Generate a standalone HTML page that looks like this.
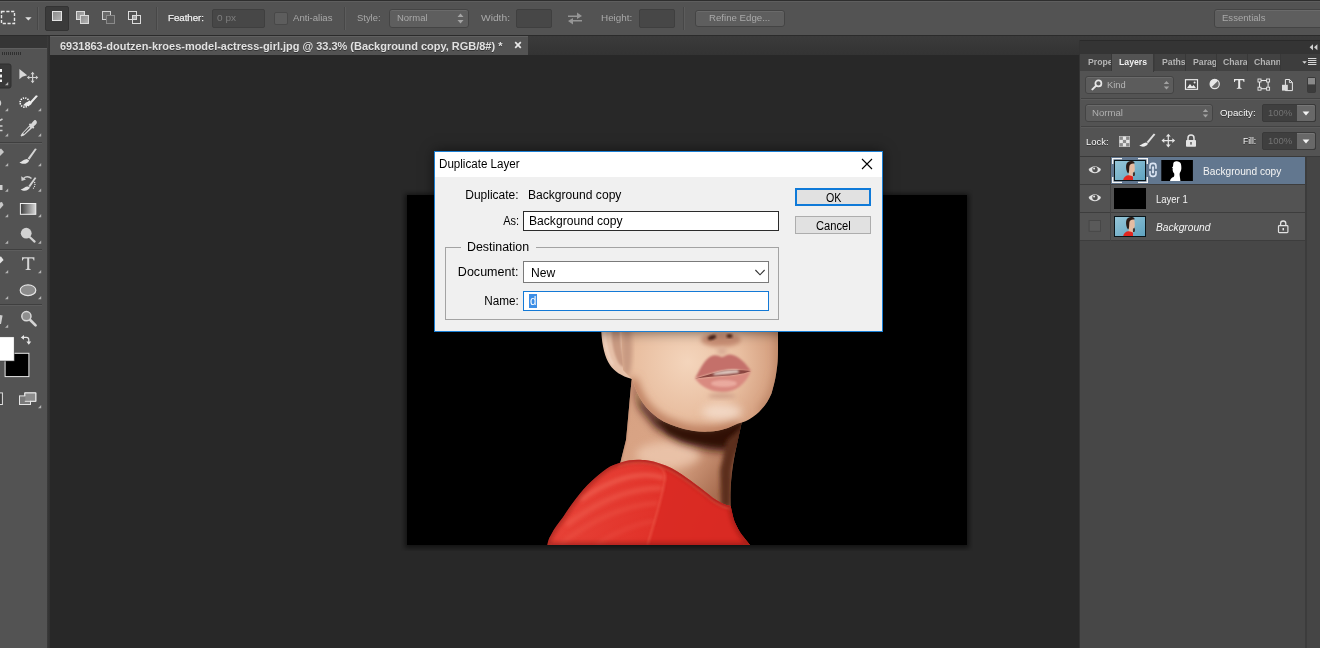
<!DOCTYPE html>
<html>
<head>
<meta charset="utf-8">
<title>Duplicate Layer</title>
<style>
*{box-sizing:border-box;margin:0;padding:0}
html,body{width:1320px;height:648px;overflow:hidden;background:#282828}
body{position:relative;font-family:"Liberation Sans",sans-serif;font-size:10.5px;color:#d6d6d6}
.abs{position:absolute}
.t{position:absolute;white-space:nowrap;line-height:14px;height:14px;transform-origin:0 50%}
.t.r{transform-origin:100% 50%}
/* ---------- options bar ---------- */
#optbar{left:0;top:0;width:1320px;height:36px;background:#535353;border-top:1px solid #2e2e2e;border-bottom:1px solid #2b2b2b;box-shadow:inset 0 1px 0 #5e5e5e}
.osep{position:absolute;top:7px;width:2px;height:23px;background:#474747;border-right:1px solid #5c5c5c}
.obox{position:absolute;background:#474747;border:1px solid #3f3f3f;border-radius:2px}
.odrop{position:absolute;background:#5e5e5e;border:1px solid #444;border-radius:3px;box-shadow:inset 0 1px 0 #6a6a6a}
.ol{color:#e4e4e4;text-shadow:0 1px 0 #333}
.od{color:#a9a9a9}
/* ---------- doc tab bar ---------- */
#tabbar{left:0;top:36px;width:1320px;height:19px;background:linear-gradient(#3b3b3b,#333)}
#doctab{left:50px;top:36px;width:478px;height:19px;background:#535353;border-top:1px solid #606060}
/* ---------- tools ---------- */
#tools{left:0;top:36px;width:47px;height:612px;background:#535353}
#toolshead{left:0;top:36px;width:47px;height:12px;background:#353535;box-shadow:0 1px 0 #5f5f5f}
#toolsborder{left:47px;top:36px;width:3px;height:612px;background:linear-gradient(90deg,#3c3c3c,#333 60%,#303030)}
/* ---------- canvas ---------- */
#canvas{left:50px;top:55px;width:1030px;height:593px;background:#282828}
/* ---------- right dock ---------- */
#dock{left:1080px;top:40px;width:240px;height:608px;background:#535353}
#dockhead{left:1080px;top:40px;width:240px;height:14px;background:#343434;border-top:1px solid #2a2a2a}
.ptab{position:absolute;top:54px;height:17px;background:#424242;border-right:1px solid #383838;overflow:hidden}
.pt{font-weight:bold;color:#b4b4b4;font-size:9.5px}
.ptab span{position:absolute;top:2px;left:6px;white-space:nowrap;color:#bdbdbd;font-weight:bold;font-size:11px;line-height:14px}
/* ---------- dialog ---------- */
#dlg{left:434px;top:151px;width:449px;height:181px;background:#f0f0f0;border:1px solid #1a7fd4;box-shadow:0 0 12px rgba(0,0,0,.55)}
.dt{position:absolute;white-space:nowrap;color:#000;font-size:12.5px;line-height:15px;height:15px;transform-origin:0 50%}
.dt.r{transform-origin:100% 50%}
.dt.c{text-align:center;transform-origin:50% 50%}
</style>
</head>
<body>
<!-- canvas -->
<div id="canvas" class="abs"></div>
<div id="tabbar" class="abs"></div>
<div id="doctab" class="abs"></div>
<div id="tools" class="abs"></div>
<div id="toolshead" class="abs"></div>
<div id="toolsborder" class="abs"></div>
<div id="optbar" class="abs"></div>
<div id="dock" class="abs"></div>
<div id="dockhead" class="abs"></div>
<!--PHOTO-->
<svg class="abs" style="left:401px;top:189px" width="572" height="362" viewBox="401 189 572 362">
<defs>
<filter id="b05" x="-20%" y="-20%" width="140%" height="140%"><feGaussianBlur stdDeviation="0.9"/></filter>
<filter id="b1" x="-20%" y="-20%" width="140%" height="140%"><feGaussianBlur stdDeviation="1"/></filter>
<filter id="b2" x="-30%" y="-30%" width="160%" height="160%"><feGaussianBlur stdDeviation="2.2"/></filter>
<filter id="b4" x="-40%" y="-40%" width="180%" height="180%"><feGaussianBlur stdDeviation="4.5"/></filter>
<filter id="b8" x="-50%" y="-50%" width="200%" height="200%"><feGaussianBlur stdDeviation="8"/></filter>
<filter id="bs" x="-5%" y="-5%" width="110%" height="110%"><feGaussianBlur stdDeviation="2.5"/></filter>
<radialGradient id="gface" gradientUnits="userSpaceOnUse" cx="688" cy="362" r="105"><stop offset="0" stop-color="#f4d5bc"/><stop offset=".5" stop-color="#e9bfa1"/><stop offset="1" stop-color="#c98d6c"/></radialGradient>
<linearGradient id="gneck" gradientUnits="userSpaceOnUse" x1="640" y1="400" x2="735" y2="470"><stop offset="0" stop-color="#d7a283"/><stop offset=".55" stop-color="#dba687"/><stop offset="1" stop-color="#a86d50"/></linearGradient>
<linearGradient id="gdress" gradientUnits="userSpaceOnUse" x1="560" y1="470" x2="740" y2="545"><stop offset="0" stop-color="#e8453a"/><stop offset=".5" stop-color="#e2342b"/><stop offset="1" stop-color="#d42720"/></linearGradient>
<clipPath id="cneck"><path d="M632,376 C630,395 628,420 626,440 L620,464 L640,530 L726,530 L730.6,506 C730,490 731,470 737,444 L742,421 L700,400 Z"/></clipPath>
<clipPath id="cface"><path d="M621,325 L778,325 L778,345 C778,360 777.5,365 776.5,371 C775,382 773,388 771.5,393.5 C768,402 763,408 759,412 C751,419 746,422 738,423.5 C729,428 720,431 710,431.5 C700,432 692,431 684,429 C674,426 665,423 658,418 C652,413 647,409 643,403 C638,396 635,388 632,379 L623,370 Z"/></clipPath>
<clipPath id="cdress"><path id="pdress" d="M620.7,462.6 C627,460 634,459.5 640,459.7 C648,460 650,460.6 653.5,461.6 C662,464 670,467 676.6,471 C684,476 690,480 696,484.8 C702,489 708,494 713,498 C719,502 725,505 730.6,506 C732,512 733,517 734.5,521.5 C737,527 739,531 742,535 L750,545 L547.4,545 C548,541 549,538 551,535 C554,529 558,524 562.8,517.6 C567,511 571,505 576.3,498.3 C581,492 586,486 591.7,481 C597,476 602,472 607,468.4 C611,466 616,464 620.7,462.6 Z"/></clipPath>
<clipPath id="cphoto"><rect x="407" y="195" width="560" height="350"/></clipPath>
</defs>
<rect x="405" y="194" width="564" height="354" fill="#000" opacity=".55" filter="url(#bs)"/>
<rect x="407" y="195" width="560" height="350" fill="#000"/>
<g clip-path="url(#cphoto)">
 <!-- neck -->
 <g clip-path="url(#cneck)">
  <rect x="600" y="370" width="160" height="170" fill="url(#gneck)"/>
  <ellipse cx="668" cy="455" rx="32" ry="13" fill="#eecbb2" opacity=".75" filter="url(#b4)"/>
  <path d="M628,372 L640,398 L655,414 L682,426 L710,429 L745,418 L745,444 L734,452 L708,450 L680,442 L656,428 L640,408 Z" fill="#3a170c" filter="url(#b4)"/>
  <path d="M660,420 L684,428 L712,430 L744,420 L744,440 L720,446 L690,442 L668,434 Z" fill="#2a0e06" opacity=".6" filter="url(#b2)"/>
  <path d="M745,425 L738,446 L732,470 L731,508 L721,506 L720,470 L727,440 Z" fill="#5c2e1e" filter="url(#b2)"/>
  <path d="M631,380 L625,440 L619,466" stroke="#c08a70" stroke-width="3" fill="none" filter="url(#b1)"/>
 </g>
 <!-- ear -->
 <path d="M601,325 L601.3,332 C602,345 605,358 610,365 C614,371 621,376 632,379 L630,350 L626,325 Z" fill="#e6c0a8"/>
 <path d="M612,328 C611,340 613,352 618,362 C620,366 624,368 626,366 C622,356 620,342 620,328 Z" fill="#c99a82" filter="url(#b1)"/>
 <path d="M604,330 C605,345 608,357 613,365" stroke="#f1d6c4" stroke-width="2" fill="none" filter="url(#b1)"/>
 <!-- face -->
 <g clip-path="url(#cface)">
  <rect x="600" y="320" width="190" height="120" fill="url(#gface)"/>
  <path d="M632,379 C635,388 638,396 643,403 C647,409 652,413 658,418 C665,423 674,426 684,429 C692,431 700,432 710,431.5 C720,431 729,428 738,423.5" stroke="#b9795a" stroke-width="9" fill="none" filter="url(#b4)"/>
  <path d="M779,325 L779,371 L773,394 L761,413" stroke="#b98263" stroke-width="7" fill="none" filter="url(#b4)"/>
  <ellipse cx="627" cy="350" rx="5" ry="26" fill="#c89a82" filter="url(#b2)"/>
  <!-- nose -->
  <ellipse cx="721" cy="340" rx="20" ry="7" fill="#c98f74" filter="url(#b2)"/>
  <ellipse cx="712" cy="337.5" rx="4.2" ry="2.2" fill="#4a2418" filter="url(#b1)" transform="rotate(-18 712 337.5)"/>
  <ellipse cx="729.5" cy="336" rx="3" ry="2" fill="#5a2d1e" filter="url(#b1)"/>
  <ellipse cx="722" cy="351" rx="5" ry="4" fill="#d9ac95" filter="url(#b2)"/>
  <!-- lips -->
  <path d="M695,378.5 C701,367 706,357.5 713,355.6 C717,354.4 720,357 722,357 C725,356.6 727,354.4 730.4,354.6 C739,356 746,363.6 751,371 C744,371.4 738,369.4 732,369.8 C722,370.4 712,373.4 695,378.5 Z" fill="#c4706a" filter="url(#b05)"/>
  <path d="M695,378.5 C700,385.6 709,391.6 722,392.4 C735,392.8 746,384 751,371 C742,374 735,375 726,375.5 C716,376 706,377 695,378.5 Z" fill="#d98a80" filter="url(#b05)"/>
  <path d="M695,378.5 C706,375.6 714,372.6 722,371 C730,369.6 740,369.6 751,371 C742,374.4 732,375.6 722,376 C712,376.6 704,377.4 695,378.5 Z" fill="#8a4540"/>
  <path d="M713,373.5 C720,371 728,369.5 738,370 L739,372.8 C730,373.8 722,374.8 714,375.2 Z" fill="#e2cfc6" filter="url(#b05)"/>
  <ellipse cx="724" cy="383.5" rx="13" ry="3.4" fill="#edb0a4" opacity=".85" filter="url(#b1)"/>
  <ellipse cx="722" cy="396" rx="14" ry="3" fill="#d3a48d" filter="url(#b2)"/>
  <ellipse cx="722" cy="412" rx="20" ry="8" fill="#f5dfcf" opacity=".8" filter="url(#b4)"/>
 </g>
 <!-- dress -->
 <g clip-path="url(#cdress)">
  <rect x="540" y="455" width="220" height="95" fill="url(#gdress)"/>
  <path d="M653.5,461.6 C662,466 666,472 665,479 C662,500 654,522 647.7,545 L760,545 L740,500 Z" fill="#d92a23" opacity=".85"/>
  <path d="M580,500 C610,480 640,470 664,478" stroke="#f26a5a" stroke-width="4" fill="none" opacity=".7" filter="url(#b2)"/>
  <path d="M566,525 C600,500 630,488 662,488" stroke="#ef5e50" stroke-width="5" fill="none" opacity=".6" filter="url(#b2)"/>
  <path d="M560,545 C590,520 625,505 658,503" stroke="#ee5a4c" stroke-width="4" fill="none" opacity=".5" filter="url(#b2)"/>
  <path d="M596,545 C615,532 635,524 654,521" stroke="#ec5548" stroke-width="4" fill="none" opacity=".4" filter="url(#b2)"/>
  <path d="M653.5,461.6 C662,466 666,472 665,479 C662,500 654,522 647.7,545" stroke="#f0604f" stroke-width="1.5" fill="none" opacity=".8" filter="url(#b1)"/>
  <path d="M618,466 C627,463 634,462.5 640,462.7 C648,463 651,463.6 654,464.6 C662,467 670,470 676,474 C684,479 690,483 696,488 C702,492 708,497 713,501 C719,505 725,508 731,509" stroke="#ef5b4c" stroke-width="2" fill="none" opacity=".8" filter="url(#b1)"/>
  <use href="#pdress" fill="none" stroke="#7d130f" stroke-width="5" opacity=".55" filter="url(#b2)"/>
 </g>
</g>
</svg>
<!--/PHOTO-->
<!--OPTBAR-->
<div class="abs" id="optitems" style="left:0;top:0;width:1320px;height:36px;font-size:9.5px">
 <!-- marquee tool preset -->
 <svg class="abs" style="left:0;top:9px" width="36" height="17" viewBox="0 0 36 17">
  <rect x="1.5" y="2.5" width="13" height="12" fill="none" stroke="#e6e6e6" stroke-width="1.4" stroke-dasharray="3.2 1.6"/>
  <path d="M25.2,8.3 L31.6,8.3 L28.4,11.6 Z" fill="#e0e0e0"/>
 </svg>
 <div class="osep" style="left:37px"></div>
 <div class="abs" style="left:45px;top:6px;width:24px;height:25px;background:#3b3b3b;border:1px solid #333;border-radius:2px"></div>
 <svg class="abs" style="left:48px;top:8px" width="100" height="20" viewBox="48 8 100 20">
  <defs><linearGradient id="gsq" x1="0" y1="0" x2="1" y2="1"><stop offset="0" stop-color="#8a8a8a"/><stop offset="1" stop-color="#b5b5b5"/></linearGradient></defs>
  <rect x="52.5" y="11.5" width="9" height="9" fill="url(#gsq)" stroke="#e4e4e4"/>
  <rect x="76.5" y="11.5" width="8" height="8" fill="url(#gsq)" stroke="#dcdcdc"/>
  <rect x="80.5" y="15.5" width="8" height="8" fill="url(#gsq)" stroke="#dcdcdc"/>
  <rect x="102.5" y="11.5" width="8" height="8" fill="#6a6a6a" stroke="#d0d0d0"/>
  <rect x="106.5" y="15.5" width="8" height="8" fill="#5a5a5a" stroke="#8a8a8a"/>
  <rect x="128.5" y="11.5" width="8" height="8" fill="none" stroke="#dcdcdc"/>
  <rect x="132.5" y="15.5" width="8" height="8" fill="none" stroke="#dcdcdc"/>
  <rect x="133" y="16" width="3" height="3" fill="#a8a8a8"/>
 </svg>
 <div class="osep" style="left:156px"></div>
 <div class="t ol" style="transform:scaleX(1.0172);left:168px;top:11.4px;color:#f2f2f2;-webkit-text-stroke:.25px #f2f2f2">Feather:</div>
 <div class="obox" style="left:212px;top:9px;width:53px;height:19px"></div>
 <div class="t" style="transform:scaleX(1.0574);left:217px;top:11.4px;color:#7d7d7d">0 px</div>
 <div class="abs" style="left:274px;top:12px;width:14px;height:13px;background:#5d5d5d;border:1px solid #484848;border-radius:2px"></div>
 <div class="t od" style="transform:scaleX(1.0108);left:293px;top:11.4px">Anti-alias</div>
 <div class="osep" style="left:344px"></div>
 <div class="t od" style="transform:scaleX(0.9888);left:357px;top:11.4px">Style:</div>
 <div class="odrop" style="left:389px;top:9px;width:80px;height:19px"></div>
 <div class="t od" style="transform:scaleX(0.9959);left:397px;top:11.4px">Normal</div>
 <svg class="abs" style="left:457px;top:13px" width="7" height="11" viewBox="0 0 7 11"><path d="M0.5,4 L6.5,4 L3.5,0.5 Z M0.5,7 L6.5,7 L3.5,10.5 Z" fill="#a5a5a5"/></svg>
 <div class="t od" style="transform:scaleX(1.0766);left:481px;top:11.4px">Width:</div>
 <div class="obox" style="left:516px;top:9px;width:36px;height:19px"></div>
 <svg class="abs" style="left:567px;top:11px" width="16" height="15" viewBox="0 0 16 15"><path d="M1,4.5 L10,4.5 L10,1.5 L15,5 L10,8 L10,6 L1,6 Z M15,10.5 L6,10.5 L6,13.5 L1,10 L6,7 L6,9 L15,9 Z" fill="#969696"/></svg>
 <div class="t od" style="transform:scaleX(1.0395);left:601px;top:11.4px">Height:</div>
 <div class="obox" style="left:639px;top:9px;width:36px;height:19px"></div>
 <div class="osep" style="left:683px"></div>
 <div class="odrop" style="left:695px;top:10px;width:90px;height:17px"></div>
 <div class="t od" style="transform:scaleX(1.0171);left:709px;top:11.4px">Refine Edge...</div>
 <div class="odrop" style="left:1214px;top:9px;width:120px;height:19px"></div>
 <div class="t od" style="transform:scaleX(1.0043);left:1222px;top:11.4px">Essentials</div>
</div>
<!-- document tab text -->
<div class="t" id="doctitle" style="transform:scaleX(0.9966);left:59.8px;top:39px;color:#e2e2e2;font-weight:bold;font-size:11px;text-shadow:0 1px 0 #333">6931863-doutzen-kroes-model-actress-girl.jpg @ 33.3% (Background copy, RGB/8#) *</div>
<svg class="abs" style="left:514px;top:41px" width="8" height="8" viewBox="0 0 8 8"><path d="M1.2,1.2 L6.8,6.8 M6.8,1.2 L1.2,6.8" stroke="#e8e8e8" stroke-width="1.7"/></svg>
<!--/OPTBAR-->
<!--TOOLS-->
<svg class="abs" id="toolsvg" style="left:0;top:48px" width="48" height="372" viewBox="0 48 48 372">
<defs>
 <linearGradient id="ggrad" x1="0" y1="0" x2="1" y2="0"><stop offset="0" stop-color="#3c3c3c"/><stop offset="1" stop-color="#d8d8d8"/></linearGradient>
 <path id="tri" d="M3.2,0 L3.2,3.2 L0,3.2 Z" fill="#b4b4b4"/>
</defs>
<!-- grip -->
<path d="M2.5,52 v3 M4.5,52 v3 M6.5,52 v3 M8.5,52 v3 M10.5,52 v3 M12.5,52 v3 M14.5,52 v3 M16.5,52 v3 M18.5,52 v3 M20.5,52 v3" stroke="#2f2f2f" stroke-width="1"/>
<!-- selected marquee -->
<rect x="-2" y="64" width="13" height="24" rx="2" fill="#393939" stroke="#303030"/>
<path d="M1,69 V72 M1,74.5 V77.5 M1,79.5 V82" stroke="#f0f0f0" stroke-width="2"/>
<use href="#tri" x="5" y="82"/>
<!-- move -->
<path d="M19.4,69 L19.4,79.2 L22.3,76.8 L27.2,75.2 Z" fill="#d8d8d8"/>
<path d="M32.6,72.8 V82.2 M27.9,77.5 H37.3" stroke="#d0d0d0" stroke-width="1.2"/>
<path d="M32.6,71.8 l-2,2.4 h4 Z M32.6,83.2 l-2,-2.4 h4 Z M26.9,77.5 l2.4,-2 v4 Z M38.3,77.5 l-2.4,-2 v4 Z" fill="#d0d0d0"/>
<!-- lasso fragment -->
<path d="M-3,99.5 a3.5,3.5 0 1 1 0,7" stroke="#cfcfcf" stroke-width="1.5" fill="none"/>
<use href="#tri" x="5" y="108"/>
<!-- quick select -->
<circle cx="24.7" cy="102.5" r="4.6" fill="none" stroke="#ffffff" stroke-width="1.6" stroke-dasharray="1.3 1.1"/>
<path d="M38,96 L36,95.2 L30.5,101.3 C27,101 25,103.5 23,105.2 C26.5,106.8 31,106 32,102.8 Z" fill="#ececec"/>
<use href="#tri" x="38" y="108"/>
<!-- crop fragment -->
<path d="M-1,121 L2.5,119 M-2,126 H2.5 M-2,130.5 H2.5" stroke="#cfcfcf" stroke-width="1.6"/>
<use href="#tri" x="5" y="133.3"/>
<!-- eyedropper -->
<path d="M35.8,120.2 C37.3,121.3 37.2,123.2 35.8,124.6 L33.6,126.6 L34.4,127.6 L33.2,128.8 L32.3,128 L24,135.6 L21.2,136.6 L20.6,135.6 L22,133.2 L29.6,125.2 L28.8,124.4 L30,123.2 L31,124 L33,121.6 C34,120 35,119.6 35.8,120.2 Z" fill="#d8d8d8"/>
<path d="M29.8,127.4 L23.6,133.6" stroke="#4a4a4a" stroke-width="1.3"/>
<use href="#tri" x="38" y="133.3"/>
<!-- sep -->
<path d="M0,142.5 H42" stroke="#3f3f3f"/><path d="M0,143.5 H42" stroke="#5d5d5d"/>
<!-- heal fragment -->
<path d="M-3,151 L1,148.5 L4,152 L0,156 Z" fill="#c6c6c6"/>
<use href="#tri" x="5" y="163"/>
<!-- brush -->
<path d="M36.8,149 L35,148.4 L27.6,158.6 L29.4,159.8 Z" fill="#d4d4d4"/>
<path d="M27,159 C24,159 22.6,161.5 19.4,162.4 C22.5,164.8 27.8,164.2 29.2,160.4 Z" fill="#e2e2e2"/>
<use href="#tri" x="38" y="163"/>
<!-- stamp fragment -->
<path d="M-2,185 H2.5 V190 H-2 Z" fill="#d0d0d0"/>
<use href="#tri" x="5" y="188.5"/>
<!-- history brush -->
<path d="M36.4,178 L34.8,177.2 L28.4,186 L30,187.2 Z" fill="#d4d4d4"/>
<path d="M27.8,186.4 C25,186.4 23.6,188.6 20.6,189.4 C23.6,191.6 28.6,191 30,187.6 Z" fill="#e2e2e2"/>
<path d="M31.5,178.6 C29,176 25.5,176.4 23.6,178.4" stroke="#cfcfcf" stroke-width="1.4" fill="none"/>
<path d="M21.2,176.2 L21.6,181 L26,179.6 Z" fill="#cfcfcf"/>
<path d="M34.5,182 C35.5,184.5 34.8,187 33,188.6" stroke="#e8e8e8" stroke-width="1.1" stroke-dasharray="1 1" fill="none"/>
<use href="#tri" x="38" y="188.5"/>
<!-- eraser fragment -->
<path d="M-3,203 L2,202 L3.5,205 L-1,210 Z" fill="#c9c9c9"/>
<use href="#tri" x="5" y="214"/>
<!-- gradient -->
<rect x="20.4" y="203.5" width="15.4" height="10.8" fill="url(#ggrad)" stroke="#f0f0f0" stroke-width="1"/>
<use href="#tri" x="38" y="214"/>
<!-- blur fragment / dodge -->
<use href="#tri" x="5" y="240.5"/>
<circle cx="26.2" cy="233.2" r="5.4" fill="#d2d2d2"/>
<path d="M29.6,237 L34.6,241.6" stroke="#d2d2d2" stroke-width="2.2" stroke-linecap="round"/>
<use href="#tri" x="38" y="240.5"/>
<!-- sep -->
<path d="M0,249.5 H42" stroke="#3f3f3f"/><path d="M0,250.5 H42" stroke="#5d5d5d"/>
<!-- pen fragment -->
<path d="M-2,257 L1,256.6 L3.6,260 L0,263.4 Z" fill="#e2e2e2"/>
<use href="#tri" x="5" y="270"/>
<!-- T -->
<path d="M22,257.2 H34.4 V260.4 H33.6 C33.3,258.8 32.8,258.4 31.4,258.4 H29.2 V268 C29.2,268.9 29.6,269.2 30.8,269.3 V270 H25.6 V269.3 C26.8,269.2 27.2,268.9 27.2,268 V258.4 H25 C23.6,258.4 23.1,258.8 22.8,260.4 H22 Z" fill="#d6d6d6"/>
<use href="#tri" x="38" y="270"/>
<!-- path select fragment / ellipse -->
<use href="#tri" x="5" y="296"/>
<ellipse cx="28" cy="290.2" rx="7.8" ry="5.4" fill="#8c8c8c" stroke="#e6e6e6" stroke-width="1.2"/>
<use href="#tri" x="38" y="296"/>
<!-- sep -->
<path d="M0,304.5 H42" stroke="#3f3f3f"/><path d="M0,305.5 H42" stroke="#5d5d5d"/>
<!-- hand fragment -->
<path d="M-1,315 L2.6,315.4 L1,324 L-2,324 Z" fill="#cdcdcd"/>
<use href="#tri" x="5" y="324.6"/>
<!-- zoom -->
<circle cx="26.4" cy="316.2" r="4.6" fill="#8f8f8f" stroke="#d8d8d8" stroke-width="1.5"/>
<path d="M30.2,320 L35.6,325.4" stroke="#d4d4d4" stroke-width="2.6" stroke-linecap="round"/>
<!-- swap arrows -->
<path d="M23.6,337.4 H26.4 C28.2,337.4 28.8,338 28.8,339.8 V342.2" stroke="#e6e6e6" stroke-width="1.2" fill="none"/>
<path d="M20.8,337.4 L24,335 V339.8 Z M28.8,344.8 L26.4,341.6 H31.2 Z" fill="#e6e6e6"/>
<!-- colours -->
<rect x="5.1" y="353.3" width="23.8" height="23.3" fill="#000" stroke="#e8e8e8" stroke-width="1"/>
<rect x="-2" y="336.8" width="16.2" height="24.2" fill="#fff" stroke="#3c3c3c" stroke-width=".6"/>
<!-- quick mask fragment -->
<rect x="-3" y="392.9" width="5.4" height="11.6" fill="#3f3f3f" stroke="#e0e0e0" stroke-width="1"/>
<!-- screen mode -->
<rect x="24.8" y="392.9" width="11" height="8.4" fill="#8a8a8a" stroke="#e4e4e4" stroke-width="1"/>
<rect x="19.5" y="395.9" width="11" height="8.6" fill="#7a7a7a" stroke="#e4e4e4" stroke-width="1"/>
<rect x="25.3" y="393.4" width="10" height="7.4" fill="#8c8c8c"/>
<path d="M24.8,401.3 H35.8 V392.9 H24.8" fill="none" stroke="#e4e4e4" stroke-width="1"/>
<path d="M24.8,392.9 V396" stroke="#e4e4e4" stroke-width="1"/>
<use href="#tri" x="38" y="405"/>
</svg>
<!--/TOOLS-->
<!--DOCK-->
<div class="abs" id="dockitems" style="left:0;top:0;width:1320px;height:648px;font-size:10px">
 <!-- collapse chevrons -->
 <svg class="abs" style="left:1309px;top:44px" width="9" height="7" viewBox="0 0 9 7"><path d="M4,0.3 L4,6.2 L0.6,3.2 Z M8.4,0.3 L8.4,6.2 L5,3.2 Z" fill="#cfcfcf"/></svg>
 <!-- tabs -->
 <div class="abs" style="left:1080px;top:54px;width:240px;height:17px;background:#3d3d3d"></div>
 <div class="ptab" style="left:1080px;width:32px"></div>
 <div class="ptab" style="left:1112px;width:42px;background:#535353;border-right:1px solid #3a3a3a;height:18px"></div>
 <div class="ptab" style="left:1155px;width:31px"></div>
 <div class="ptab" style="left:1186px;width:31px"></div>
 <div class="ptab" style="left:1217px;width:31px"></div>
 <div class="ptab" style="left:1248px;width:33px"></div>
 <div class="abs" style="left:1087.5px;top:55px;width:23.7px;height:16px;overflow:hidden"><div class="t pt" style="transform:scaleX(0.9150);left:0;top:0.4px;color:#b4b4b4">Properties</div></div>
 <div class="abs" style="left:1118.5px;top:55px;width:31.5px;height:16px;overflow:hidden"><div class="t pt" style="transform:scaleX(0.9150);left:0;top:0.4px;color:#f2f2f2">Layers</div></div>
 <div class="abs" style="left:1161.6px;top:55px;width:23.6px;height:16px;overflow:hidden"><div class="t pt" style="transform:scaleX(0.9150);left:0;top:0.4px;color:#b4b4b4">Paths</div></div>
 <div class="abs" style="left:1192.8px;top:55px;width:23.0px;height:16px;overflow:hidden"><div class="t pt" style="transform:scaleX(0.9150);left:0;top:0.4px;color:#b4b4b4">Paragraph</div></div>
 <div class="abs" style="left:1223px;top:55px;width:24.3px;height:16px;overflow:hidden"><div class="t pt" style="transform:scaleX(0.9150);left:0;top:0.4px;color:#b4b4b4">Character</div></div>
 <div class="abs" style="left:1254px;top:55px;width:26.0px;height:16px;overflow:hidden"><div class="t pt" style="transform:scaleX(0.9150);left:0;top:0.4px;color:#b4b4b4">Channels</div></div>
 <svg class="abs" style="left:1302px;top:58px" width="15" height="8" viewBox="0 0 15 8"><path d="M0.3,3.2 H4.8 L2.5,5.8 Z" fill="#d6d6d6"/><path d="M6,0.5 H14.4 M6,2.5 H14.4 M6,4.5 H14.4 M6,6.5 H14.4" stroke="#d6d6d6" stroke-width="1"/></svg>
 <!-- filter row -->
 <div class="odrop" style="left:1085px;top:76px;width:89px;height:18px;background:#5c5c5c"></div>
 <svg class="abs" style="left:1091px;top:79px" width="12" height="12" viewBox="0 0 12 12"><circle cx="7.4" cy="4.4" r="3" fill="none" stroke="#e6e6e6" stroke-width="1.7"/><path d="M5.2,6.6 L1.4,10.4" stroke="#e6e6e6" stroke-width="2" stroke-linecap="round"/></svg>
 <div class="t" style="transform:scaleX(0.9834);font-size:9.5px;left:1106.6px;top:78.3px;color:#b6b6b6">Kind</div>
 <svg class="abs" style="left:1163px;top:80px" width="7" height="11" viewBox="0 0 7 11"><path d="M0.8,4 L6.2,4 L3.5,1 Z M0.8,6.6 L6.2,6.6 L3.5,9.6 Z" fill="#a2a2a2"/></svg>
 <svg class="abs" style="left:1184px;top:76px" width="134" height="18" viewBox="1184 76 134 18">
  <!-- image -->
  <rect x="1185.5" y="79.7" width="12" height="9.6" fill="#4a4a4a" stroke="#ececec" stroke-width="1.2"/>
  <path d="M1187,88 L1190,84 L1192,86.4 L1193.6,85 L1196,88 Z" fill="#ececec"/><circle cx="1194.6" cy="82.6" r="1" fill="#ececec"/>
  <!-- adjust -->
  <circle cx="1214.7" cy="84" r="4.6" fill="#6a6a6a" stroke="#e8e8e8" stroke-width="1.2"/>
  <path d="M1211.4,87.3 A4.6,4.6 0 0 1 1218,80.7 Z" fill="#e8e8e8"/>
  <!-- T -->
  <path d="M1234,79 H1244.4 V82 H1243.6 C1243.4,80.6 1243,80.2 1241.8,80.2 H1240.2 V87 C1240.2,87.8 1240.6,88 1241.6,88.1 V88.8 H1236.8 V88.1 C1237.8,88 1238.2,87.8 1238.2,87 V80.2 H1236.6 C1235.4,80.2 1235,80.6 1234.8,82 H1234 Z" fill="#ececec"/>
  <!-- transform -->
  <rect x="1259.5" y="80.5" width="8.6" height="8.2" fill="none" stroke="#e8e8e8" stroke-width="1.1"/>
  <rect x="1258" y="79" width="3" height="3" fill="#535353" stroke="#e8e8e8" stroke-width=".9"/><rect x="1266.6" y="79" width="3" height="3" fill="#535353" stroke="#e8e8e8" stroke-width=".9"/>
  <rect x="1258" y="87.2" width="3" height="3" fill="#535353" stroke="#e8e8e8" stroke-width=".9"/><rect x="1266.6" y="87.2" width="3" height="3" fill="#535353" stroke="#e8e8e8" stroke-width=".9"/>
  <!-- smart object -->
  <path d="M1285.4,79.5 H1289.6 L1292.4,82.4 V90.6 H1285.4 Z" fill="#535353" stroke="#e8e8e8" stroke-width="1"/>
  <path d="M1289.4,79.5 V82.6 H1292.4" fill="none" stroke="#e8e8e8" stroke-width=".9"/>
  <rect x="1282" y="84.8" width="5.8" height="5.8" fill="#dcdcdc"/>
  <!-- toggle -->
  <rect x="1307.5" y="77.5" width="8" height="15" rx="1" fill="#3c3c3c" stroke="#3a3a3a"/>
  <rect x="1308" y="78" width="7" height="6.4" fill="#8a8a8a"/>
 </svg>
 <div class="abs" style="left:1081px;top:98px;width:239px;height:1px;background:#424242"></div>
 <div class="abs" style="left:1081px;top:99px;width:239px;height:1px;background:#5b5b5b"></div>
 <!-- blend row -->
 <div class="odrop" style="left:1085px;top:104px;width:128px;height:18px;background:#5c5c5c"></div>
 <div class="t" style="transform:scaleX(1.0122);font-size:9.5px;left:1092.3px;top:105.6px;color:#b0b0b0">Normal</div>
 <svg class="abs" style="left:1202px;top:108px" width="7" height="11" viewBox="0 0 7 11"><path d="M0.8,4 L6.2,4 L3.5,1 Z M0.8,6.6 L6.2,6.6 L3.5,9.6 Z" fill="#a2a2a2"/></svg>
 <div class="t ol" style="transform:scaleX(1.0212);font-size:9.5px;left:1220.2px;top:105.8px;color:#f6f6f6">Opacity:</div>
 <div class="abs" style="left:1262px;top:104px;width:54px;height:18px;background:#3f3f3f;border:1px solid #393939;border-radius:2px"></div>
 <div class="abs" style="left:1297px;top:105px;width:18px;height:16px;background:#686868;border-radius:0 2px 2px 0;box-shadow:inset 0 1px 0 #777"></div>
 <div class="t" style="transform:scaleX(0.9995);font-size:9.5px;left:1267.7px;top:106.3px;color:#737373">100%</div>
 <svg class="abs" style="left:1302px;top:111px" width="8" height="5" viewBox="0 0 8 5"><path d="M0.6,0.6 H7.4 L4,4.4 Z" fill="#f4f4f4"/></svg>
 <div class="abs" style="left:1081px;top:126px;width:239px;height:1px;background:#424242"></div>
 <div class="abs" style="left:1081px;top:127px;width:239px;height:1px;background:#5b5b5b"></div>
 <!-- lock row -->
 <div class="t ol" style="transform:scaleX(0.9948);font-size:9.5px;left:1086.4px;top:134.5px;color:#f6f6f6">Lock:</div>
 <svg class="abs" style="left:1118px;top:132px" width="82" height="17" viewBox="1118 132 82 17">
  <rect x="1119.3" y="136.3" width="10.4" height="10.4" fill="#e6e6e6" stroke="#cfcfcf" stroke-width=".6"/>
  <rect x="1119.6" y="136.6" width="3.3" height="3.3" fill="#8a8a8a"/><rect x="1126.1" y="136.6" width="3.3" height="3.3" fill="#8a8a8a"/><rect x="1122.9" y="139.9" width="3.2" height="3.2" fill="#8a8a8a"/><rect x="1119.6" y="143.1" width="3.3" height="3.3" fill="#8a8a8a"/><rect x="1126.1" y="143.1" width="3.3" height="3.3" fill="#8a8a8a"/>
  <path d="M1155.4,134.4 L1153.8,133.6 L1146.6,142 L1148.2,143.2 Z" fill="#e0e0e0"/>
  <path d="M1146,142.4 C1143.4,142.4 1142,144.8 1139.2,145.6 C1142,147.6 1146.8,147 1148,143.6 Z" fill="#ececec"/>
  <path d="M1168.3,135.6 V145.6 M1163.3,140.6 H1173.3" stroke="#e4e4e4" stroke-width="1.2"/>
  <path d="M1168.3,133.8 l-2.4,2.8 h4.8 Z M1168.3,147.4 l-2.4,-2.8 h4.8 Z M1161.5,140.6 l2.8,-2.4 v4.8 Z M1175.1,140.6 l-2.8,-2.4 v4.8 Z" fill="#e4e4e4"/>
  <rect x="1186" y="140" width="10" height="6.8" rx=".8" fill="#e4e4e4"/>
  <path d="M1188,140 V138 a3,3 0 0 1 6,0 V140" fill="none" stroke="#e4e4e4" stroke-width="1.5"/>
  <rect x="1190.3" y="142" width="1.4" height="2.6" fill="#555"/>
 </svg>
 <div class="t ol" style="transform:scaleX(0.8930);font-size:9.5px;left:1242.7px;top:133.8px;color:#f6f6f6">Fill:</div>
 <div class="abs" style="left:1262px;top:132px;width:54px;height:18px;background:#3f3f3f;border:1px solid #393939;border-radius:2px"></div>
 <div class="abs" style="left:1297px;top:133px;width:18px;height:16px;background:#686868;border-radius:0 2px 2px 0;box-shadow:inset 0 1px 0 #777"></div>
 <div class="t" style="transform:scaleX(0.9995);font-size:9.5px;left:1267.7px;top:134.3px;color:#737373">100%</div>
 <svg class="abs" style="left:1302px;top:139px" width="8" height="5" viewBox="0 0 8 5"><path d="M0.6,0.6 H7.4 L4,4.4 Z" fill="#f4f4f4"/></svg>
 <!-- layer list -->
 <div class="abs" style="left:1080px;top:156px;width:240px;height:492px;background:#474747;border-top:1px solid #3a3a3a"></div>
 <div class="abs" style="left:1305px;top:157px;width:15px;height:491px;background:#454545;border-left:2px solid #3c3c3c"></div>
 <div class="abs" style="left:1080px;top:157px;width:225px;height:27px;background:#535353"></div>
 <div class="abs" style="left:1111px;top:157px;width:194px;height:27px;background:#62778f"></div>
 <div class="abs" style="left:1080px;top:184px;width:225px;height:1px;background:#3d3d3d"></div>
 <div class="abs" style="left:1080px;top:185px;width:225px;height:27px;background:#535353"></div>
 <div class="abs" style="left:1080px;top:212px;width:225px;height:1px;background:#3d3d3d"></div>
 <div class="abs" style="left:1080px;top:213px;width:225px;height:27px;background:#535353"></div>
 <div class="abs" style="left:1080px;top:240px;width:225px;height:1px;background:#3d3d3d"></div>
 <div class="abs" style="left:1110px;top:157px;width:1px;height:84px;background:#434343"></div>
 <div class="abs" style="left:1079px;top:40px;width:1px;height:608px;background:#333"></div>
<svg class="abs" style="left:1080px;top:157px" width="225" height="84" viewBox="1080 157 225 84">
 <defs>
  <linearGradient id="gsky" x1="0" y1="0" x2="1" y2="1"><stop offset="0" stop-color="#96c6d8"/><stop offset="1" stop-color="#5fa3c0"/></linearGradient>
  <g id="eye"><path d="M0,4 C2.6,-0.8 9.8,-0.8 12.4,4 C9.8,8.6 2.6,8.6 0,4 Z" fill="#e2e2e2"/><circle cx="6.4" cy="3.7" r="2.7" fill="#505050"/><circle cx="5.5" cy="2.7" r="1" fill="#e2e2e2"/></g>
  <g id="thumb"><rect x="0" y="0" width="32" height="21" fill="#0a1418"/><rect x="1" y="1" width="30" height="19" fill="url(#gsky)"/>
   <path d="M20,11.4 C21.2,12.6 21.2,14.6 20.4,16 L19,16 L19.2,12 Z" fill="#3a2820"/>
   <path d="M13.6,4 C14.6,2 19,1.6 20.2,4 C21,5.8 20.6,7.6 20.8,9 C21,10.6 20.2,12.2 18.8,12.8 L18.6,14.4 L19.2,16.4 L14.4,16.6 L14.8,13 C13.2,11 12.8,6.4 13.6,4 Z" fill="#e6bca2"/>
   <path d="M12.2,5 C12.6,1.6 16.4,0.2 19,1.2 C20.4,1.8 20.8,2.8 20.4,3.6 C18.6,3 16.4,3.6 15.6,5.4 C15,7.4 15.4,10 14.8,12.4 L14,13.4 C12.2,11.2 11.8,7.6 12.2,5 Z" fill="#2a1a14"/>
   <path d="M9.2,20 C9.6,17.6 11.4,15.6 14,15.2 C16,15 18,15.8 19,16.8 L19,20 Z" fill="#e3261f"/></g>
 </defs>
 <use href="#eye" x="1088.6" y="165.8"/>
 <use href="#eye" x="1088.6" y="193.8"/>
 <rect x="1089.1" y="220.5" width="11.4" height="10.8" fill="#5a5a5a" stroke="#474747" stroke-width="1"/>
 <!-- selection corners -->
 <path d="M1112.7,164 V158.6 H1122 M1138,158.6 H1147.3 V164 M1147.3,177 V182.4 H1138 M1122,182.4 H1112.7 V177" fill="none" stroke="#f4f4f4" stroke-width="1.4"/>
 <use href="#thumb" x="1114" y="160"/>
 <!-- link -->
 <rect x="1150" y="163.4" width="6" height="13" rx="2.6" fill="none" stroke="#dbe4f2" stroke-width="1.6"/>
 <rect x="1152.2" y="166.6" width="1.6" height="6.6" fill="#dbe4f2"/>
 <rect x="1149" y="168.8" width="8" height="2.2" fill="#62778f"/>
 <rect x="1152.2" y="166.6" width="1.6" height="6.6" fill="#dbe4f2"/>
 <!-- mask -->
 <rect x="1161.3" y="160" width="31.6" height="21" fill="#000"/>
 <path d="M1173.2,164.4 C1173,162 1175,161 1177,161.2 C1179.6,161.4 1181.2,163 1181.2,165.4 C1181.4,167.6 1181.6,169.4 1180.6,171.4 C1180,172.4 1179.6,173 1179.6,174 C1179.6,176 1180.2,178 1180.4,181 L1170,181 C1170.4,179 1171.6,177.6 1173.6,177 C1174.4,176.4 1174.4,175 1174.2,173.6 C1172.6,171.6 1172.4,169.6 1172.8,168.4 L1172,167.4 L1173,166.4 Z" fill="#fff"/>
 <rect x="1114" y="188" width="32" height="21" fill="#000"/>
 <use href="#thumb" x="1114" y="216"/>
 <!-- lock -->
 <rect x="1278.5" y="225.6" width="9.4" height="7" rx=".8" fill="none" stroke="#e2e2e2" stroke-width="1.2"/>
 <path d="M1280.6,225.4 V223.6 a2.6,2.6 0 0 1 5.2,0 V225.4" fill="none" stroke="#e2e2e2" stroke-width="1.3"/>
 <rect x="1282.5" y="228" width="1.5" height="2.4" fill="#e2e2e2"/>
</svg>

 <div class="t" style="transform:scaleX(1.0132);left:1203px;top:164.5px;color:#f4f4f4">Background copy</div>
 <div class="t" style="transform:scaleX(0.9503);left:1156.4px;top:192.5px;color:#f4f4f4">Layer 1</div>
 <div class="t" style="transform:scaleX(1.0192);left:1156.3px;top:220.5px;color:#f4f4f4;font-style:italic">Background</div>
</div>
<!--/DOCK-->
<!--DIALOG-->
<div id="dlg" class="abs"></div>
<div class="abs" style="left:435px;top:152px;width:447px;height:25px;background:#fff"></div>
<div class="dt" style="transform:scaleX(0.9665);left:438.6px;top:157.1px;font-size:12px;transform-origin:0 50%">Duplicate Layer</div>
<svg class="abs" style="left:861px;top:158px" width="12" height="12" viewBox="0 0 12 12"><path d="M1,1 L11,11 M11,1 L1,11" stroke="#000" stroke-width="1.1"/></svg>
<!-- row 1 -->
<div class="dt r" style="transform:scaleX(0.9587);right:801.2px;top:187.9px">Duplicate:</div>
<div class="dt" style="transform:scaleX(0.9669);left:527.6px;top:187.9px">Background copy</div>
<!-- row 2 -->
<div class="dt r" style="transform:scaleX(0.8803);right:801.2px;top:213.7px">As:</div>
<div class="abs" style="left:523px;top:211px;width:256px;height:20px;background:#fff;border:1px solid #2b2b2b"></div>
<div class="dt" style="transform:scaleX(0.9690);left:529.4px;top:213.7px">Background copy</div>
<!-- buttons -->
<div class="abs" style="left:795px;top:188px;width:76px;height:18px;background:#e1e1e1;border:2px solid #0f7ad8"></div>
<div class="dt" style="transform:scaleX(0.8526);left:825.6px;top:190.7px">OK</div>
<div class="abs" style="left:795px;top:216px;width:76px;height:18px;background:#e1e1e1;border:1px solid #adadad"></div>
<div class="dt" style="transform:scaleX(0.8915);left:815.6px;top:218.5px">Cancel</div>
<!-- fieldset -->
<div class="abs" style="left:445px;top:247px;width:334px;height:73px;border:1px solid #a3a3a3"></div>
<div class="abs" style="left:461px;top:245px;width:75px;height:5px;background:#f0f0f0"></div>
<div class="dt" style="transform:scaleX(0.9929);left:467.3px;top:240.2px">Destination</div>
<div class="dt r" style="transform:scaleX(1.0024);right:801.2px;top:265.2px">Document:</div>
<div class="abs" style="left:523px;top:261px;width:246px;height:22px;background:#fff;border:1px solid #7a7a7a"></div>
<div class="dt" style="transform:scaleX(0.9674);left:530.5px;top:265.8px">New</div>
<svg class="abs" style="left:754px;top:268px" width="12" height="9" viewBox="0 0 12 9"><path d="M1.4,2 L6,6.8 L10.6,2" fill="none" stroke="#333" stroke-width="1.1"/></svg>
<div class="dt r" style="transform:scaleX(0.9395);right:801.2px;top:294.0px">Name:</div>
<div class="abs" style="left:523px;top:291px;width:246px;height:20px;background:#fff;border:1px solid #1379d6"></div>
<div class="abs" style="left:528.6px;top:294.3px;width:8.4px;height:13.7px;background:#3d8fe6"></div>
<div class="dt" style="transform:scaleX(0.9204);left:529.6px;top:294.0px;color:#fff">d</div>
<!--/DIALOG-->
</body>
</html>
